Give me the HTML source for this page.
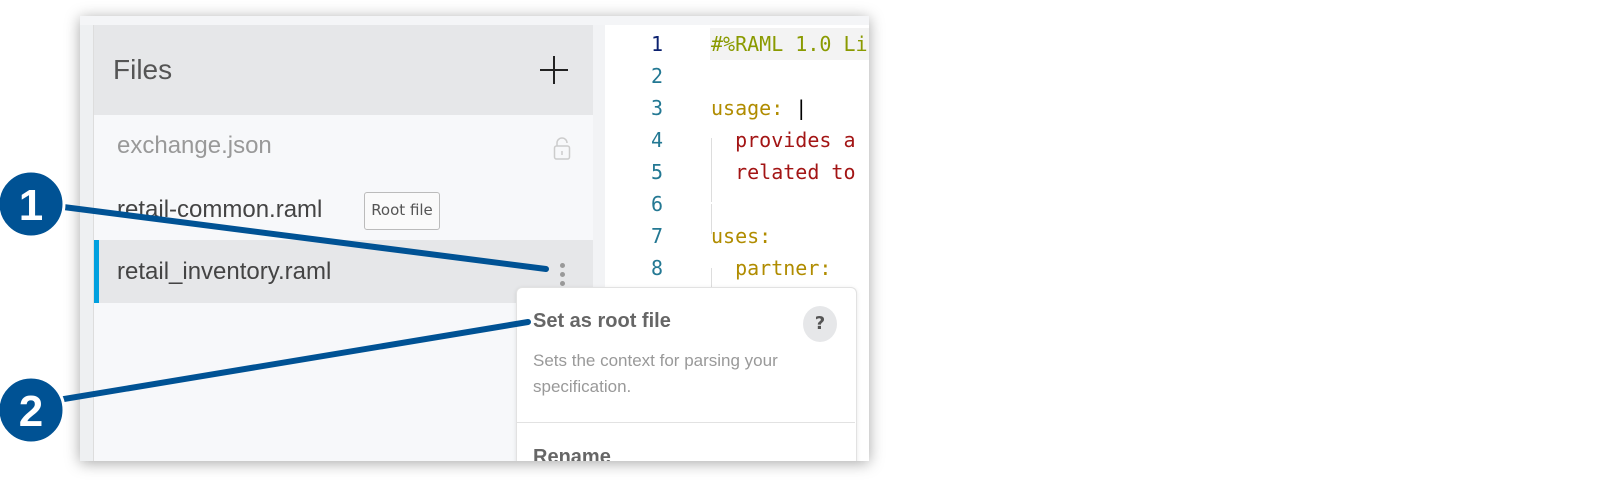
<!DOCTYPE html>
<html><head><style>
body{margin:0;width:1598px;height:494px;background:#fff;position:relative;overflow:hidden;font-family:"DejaVu Sans","Liberation Sans",sans-serif}
.shot{position:absolute;left:80px;top:16px;width:789px;height:445px;background:#f7f8fa;box-shadow:0 2px 14px rgba(0,0,0,.35);overflow:hidden}
.abs{position:absolute}
.mono{font-family:"DejaVu Sans Mono","Liberation Mono",monospace;font-size:20px}
.mono div{white-space:pre;height:32px}
</style></head><body>
<div class="shot">
 <div class="abs" style="left:0;top:0;width:789px;height:9px;background:#f4f5f7;border-bottom:1px solid #e6e7e9"></div>
 <div class="abs" style="left:0;top:9px;width:13px;height:436px;background:#eef0f2;border-right:1px solid #ddd"></div>
 <div class="abs" style="left:14px;top:10px;width:499px;height:89px;background:#e6e7e9"></div>
 <div class="abs" style="left:33px;top:38px;font-size:28px;color:#555;font-family:'Liberation Sans',sans-serif">Files</div>
 <div class="abs" style="left:460px;top:53px;width:28px;height:2px;background:#222"></div>
 <div class="abs" style="left:473px;top:40px;width:2px;height:28px;background:#222"></div>
 <div class="abs" style="left:37px;top:116px;font-size:24px;color:#999;font-family:'Liberation Sans',sans-serif">exchange.json</div>
 <svg class="abs" style="left:473px;top:121px" width="18" height="24"><rect x="1.5" y="9" width="15" height="13" rx="2" fill="none" stroke="#ccc" stroke-width="1.5"/><path d="M4 9V6a5 5 0 0 1 10 0" fill="none" stroke="#ccc" stroke-width="1.5"/><line x1="9" y1="14" x2="9" y2="18" stroke="#ccc" stroke-width="1.5"/></svg>
 <div class="abs" style="left:37px;top:180px;font-size:24px;color:#444;font-family:'Liberation Sans',sans-serif">retail-common.raml</div>
 <div class="abs" style="left:284px;top:176px;width:74px;height:36px;border:1.5px solid #bbb;border-radius:3px;font-size:15px;color:#555;text-align:center;line-height:35px;background:#fafafa">Root file</div>
 <div class="abs" style="left:14px;top:224px;width:499px;height:63px;background:#e6e7e9"></div>
 <div class="abs" style="left:14px;top:224px;width:5px;height:63px;background:#00a0df"></div>
 <div class="abs" style="left:37px;top:242px;font-size:24px;color:#444;font-family:'Liberation Sans',sans-serif">retail_inventory.raml</div>
 <div class="abs" style="left:480px;top:247px;width:5px;height:5px;border-radius:50%;background:#999;box-shadow:0 9px 0 #999,0 18px 0 #999"></div>
 <div class="abs" style="left:513px;top:9px;width:12px;height:436px;background:#f2f3f5"></div>
 <div class="abs" style="left:525px;top:9px;width:264px;height:436px;background:#fff"></div>
 <div class="abs" style="left:630px;top:12px;width:159px;height:32px;background:#f3f3f3"></div>
 <div class="abs mono" style="left:571px;top:12px;line-height:32px;color:#237893"><div style="color:#0b216f">1</div><div>2</div><div>3</div><div>4</div><div>5</div><div>6</div><div>7</div><div>8</div></div>
 <div class="abs mono" style="left:631px;top:12px;line-height:32px"><div style="color:#8a9a00">#%RAML 1.0 Li</div><div> </div><div style="color:#b08c00">usage: <span style="color:#000">|</span></div><div style="color:#a31515">  provides a</div><div style="color:#a31515">  related to</div><div> </div><div style="color:#b08c00">uses:</div><div style="color:#b08c00">  partner:</div></div>
 <div class="abs" style="left:631px;top:122px;width:1px;height:64px;background:#ddd"></div>
 <div class="abs" style="left:631px;top:188px;width:1px;height:30px;background:#ddd"></div>
 <div class="abs" style="left:631px;top:252px;width:1px;height:30px;background:#ddd"></div>
 <div class="abs" style="left:436px;top:271px;width:339px;height:180px;background:#fff;border:1px solid #e2e2e2;border-radius:6px;box-shadow:0 1px 4px rgba(0,0,0,.1)"></div>
 <div class="abs" style="left:453px;top:294px;font-size:20px;font-weight:bold;color:#666;font-family:'Liberation Sans',sans-serif">Set as root file</div>
 <div class="abs" style="left:723px;top:290px;width:34px;height:36px;border-radius:50%;background:#e6e7e9;text-align:center;line-height:36px;font-weight:bold;color:#555;font-size:18px">?</div>
 <div class="abs" style="left:453px;top:332px;font-size:17px;color:#999;line-height:26px;font-family:'Liberation Sans',sans-serif">Sets the context for parsing your<br>specification.</div>
 <div class="abs" style="left:437px;top:406px;width:338px;height:1px;background:#e2e2e2"></div>
 <div class="abs" style="left:453px;top:430px;font-size:20px;font-weight:bold;color:#666;font-family:'Liberation Sans',sans-serif">Rename</div>
</div>
<svg class="abs" style="left:0;top:0" width="900" height="494">
 <line x1="40" y1="204" x2="546" y2="269" stroke="#005294" stroke-width="6" stroke-linecap="round"/>
 <line x1="40" y1="403" x2="528" y2="322" stroke="#005294" stroke-width="6" stroke-linecap="round"/>
 <circle cx="31" cy="204" r="33" fill="#005294" stroke="#fff" stroke-width="3"/>
 <circle cx="31" cy="410" r="33" fill="#005294" stroke="#fff" stroke-width="3"/>
 <text x="31" y="220" text-anchor="middle" font-family="Liberation Sans" font-weight="bold" font-size="44" fill="#fff">1</text>
 <text x="31" y="426" text-anchor="middle" font-family="Liberation Sans" font-weight="bold" font-size="44" fill="#fff">2</text>
</svg>
</body></html>
